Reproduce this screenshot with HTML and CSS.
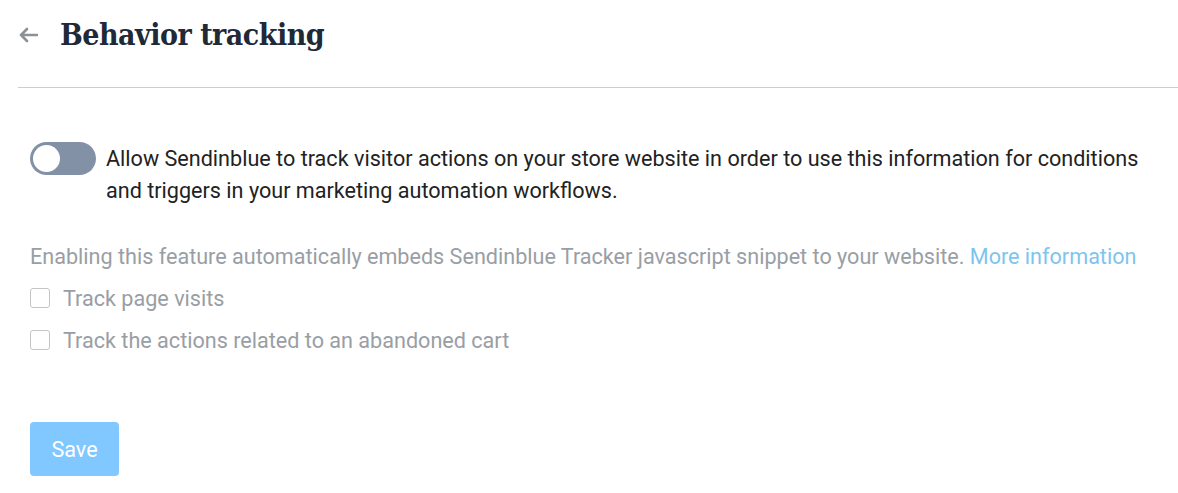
FILE: index.html
```html
<!DOCTYPE html>
<html lang="en">
<head>
    <meta charset="UTF-8">
    <title>Behavior tracking</title>
    <link rel="stylesheet" href="styles.css">
</head>
<body>
    <!-- Header -->
    <div class="header">
        <a class="back" href="#">
            <svg width="20" height="16" viewBox="0 0 20 16"><path d="M19 8H3M9 2L3 8l6 6" fill="none" stroke="#8c9196" stroke-width="2.6" stroke-linecap="round" stroke-linejoin="round"/></svg>
        </a>
        <h1>Behavior tracking</h1>
    </div>

    <div class="content">
        <!-- Toggle -->
        <div class="toggleRow">
            <span class="toggle"><span class="knob"></span></span>
            <p>Allow Sendinblue to track visitor actions on your store website in order to use this information for conditions and triggers in your marketing automation workflows.</p>
        </div>

        <p class="note">Enabling this feature automatically embeds Sendinblue Tracker javascript snippet to your website. <a href="#">More information</a></p>

        <div class="checks">
            <label class="check"><span class="box"></span>Track page visits</label>
            <label class="check"><span class="box"></span>Track the actions related to an abandoned cart</label>
        </div>

        <button class="save">Save</button>
    </div>
</body>
</html>
```

FILE: styles.css
```css
/* Global Styling */
body {
    margin: 0;
    font-family: Roboto, "Liberation Sans", sans-serif;
    background: #fff;
    color: #1f2d3d;
}

/* Header */
.header {
    display: flex;
    align-items: center;
    height: 88px;
    margin-left: 18px;
    border-bottom: 1px solid #c8cfd6;
    box-sizing: border-box;
    padding-bottom: 18px;
}
.back {
    display: flex;
    width: 20px;
    margin-right: 22px;
}
h1 {
    margin: 0;
    font-family: "DejaVu Serif Condensed", "DejaVu Serif", serif;
    font-stretch: condensed;
    font-weight: bold;
    font-size: 30px;
    letter-spacing: -0.5px;
    color: #1f2937;
}

/* Content */
.content {
    padding: 55px 30px 0 30px;
}
.toggleRow {
    display: flex;
    align-items: flex-start;
}
.toggleRow p {
    margin: 0;
    font-size: 21.6px;
    line-height: 32px;
    color: #222;
}
.toggle {
    flex: none;
    width: 66px;
    height: 33px;
    border-radius: 17px;
    background: #8391a7;
    margin-right: 10px;
    margin-top: -1px;
    position: relative;
}
.knob {
    position: absolute;
    left: 3px;
    top: 3px;
    width: 27px;
    height: 27px;
    border-radius: 50%;
    background: #fff;
}

.note {
    margin: 34px 0 0 0;
    font-size: 21.6px;
    line-height: 32px;
    color: #999ea5;
}
.note a {
    color: #7dc5ee;
    text-decoration: none;
}

/* Checkboxes */
.checks {
    margin-top: 4px;
}
.check {
    display: flex;
    align-items: center;
    height: 42px;
    font-size: 21.6px;
    color: #999ea5;
}
.box {
    width: 18px;
    height: 18px;
    border: 1px solid #c4c4c4;
    border-radius: 3px;
    margin-right: 13px;
}

/* Button */
.save {
    margin-top: 61px;
    width: 89px;
    height: 54px;
    border: none;
    border-radius: 4px;
    background: #80c8ff;
    color: #fff;
    font-family: Roboto, sans-serif;
    font-size: 21.6px;
}
```
